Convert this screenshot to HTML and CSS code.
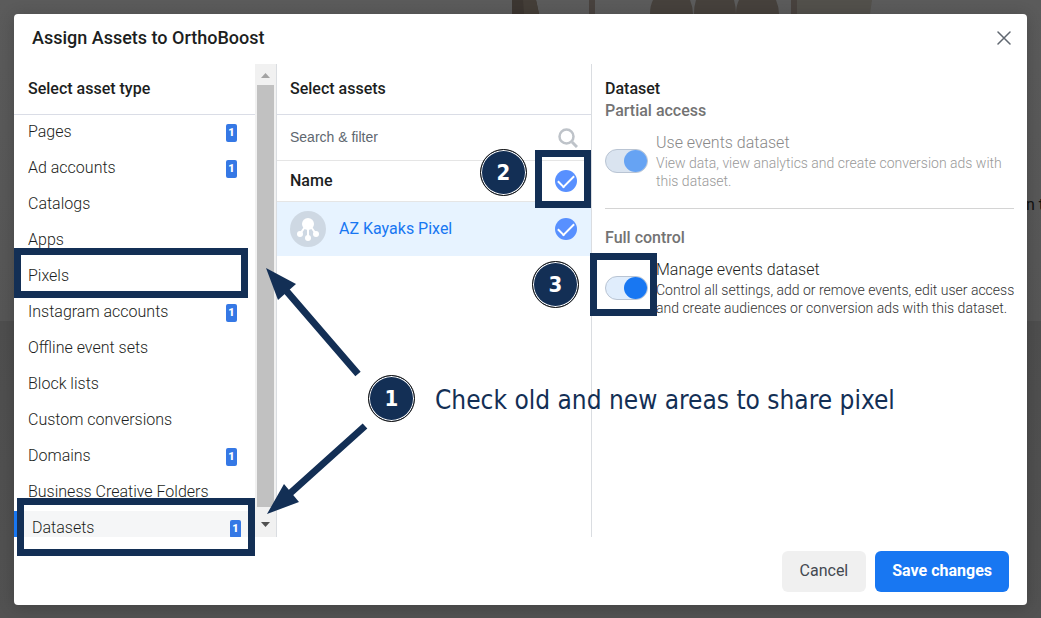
FILE: index.html
```
<!DOCTYPE html>
<html lang="en">
    <head>
        <meta charset="utf-8">
        <title>Assign Assets to OrthoBoost</title>
        <link rel="stylesheet" href="styles.css">
    </head>
    <body>
        <svg class="backdrop-art" width="360" height="14" viewBox="0 0 360 14" aria-hidden="true">
            <path d="M0 0h24l3 14H0z" fill="#3c3631"/>
            <path d="M11 0h13l3 14H12z" fill="#443e38"/>
            <path d="M77 0h6v14h-6zM279 0h6v14h-6z" fill="#48423e"/>
            <path d="M285 0h75l-2 14h-73z" fill="#52504b"/>
            <path d="M141 0h37q3 7 3 14h-43q0-8 3-14zM184 0h38q2 7 2 14h-42q0-8 2-14zM227 0h37q3 7 3 14h-43q0-8 3-14z" fill="#46413c"/>
        </svg>
        <span class="backdrop-text">n t</span>

        <div class="dialog" role="dialog" aria-labelledby="dialog-title">
            <header class="dialog-header">
                <h1 id="dialog-title">Assign Assets to OrthoBoost</h1>
                <button class="close" aria-label="Close">
                    <svg width="14" height="14" viewBox="0 0 14 14"><path d="M1 1l12 12M13 1L1 13" stroke="#606770" stroke-width="1.5" stroke-linecap="round"/></svg>
                </button>
            </header>

            <div class="columns">
                <section class="types">
                    <div class="types-list">
                        <h2>Select asset type</h2>
                        <ul>
                            <li><span class="name">Pages</span><span class="badge">1</span></li>
                            <li><span class="name">Ad accounts</span><span class="badge">1</span></li>
                            <li><span class="name">Catalogs</span></li>
                            <li><span class="name">Apps</span></li>
                            <li><span class="name">Pixels</span></li>
                            <li><span class="name">Instagram accounts</span><span class="badge">1</span></li>
                            <li><span class="name">Offline event sets</span></li>
                            <li><span class="name">Block lists</span></li>
                            <li><span class="name">Custom conversions</span></li>
                            <li><span class="name">Domains</span><span class="badge">1</span></li>
                            <li><span class="name">Business Creative Folders</span></li>
                            <li class="selected"><span class="name">Datasets</span><span class="badge">1</span></li>
                        </ul>
                    </div>
                    <div class="scrollbar">
                        <svg width="9" height="5" viewBox="0 0 9 5"><path d="M0 5L4.500 0L9 5z" fill="#a3a3a3"/></svg>
                        <div class="thumb"></div>
                        <svg width="9" height="5" viewBox="0 0 9 5"><path d="M0 0L4.500 5L9 0z" fill="#505050"/></svg>
                    </div>
                </section>

                <section class="assets">
                    <h2>Select assets</h2>
                    <div class="search">
                        <input type="text" placeholder="Search &amp; filter" aria-label="Search and filter">
                        <svg width="20" height="20" viewBox="0 0 20 20"><circle cx="8.500" cy="8.500" r="7" fill="none" stroke="#bec3c9" stroke-width="2.500"/><path d="M14 14l5 5" stroke="#bec3c9" stroke-width="3"/></svg>
                    </div>
                    <div class="name-row">
                        <label for="all-assets">Name</label>
                        <input type="checkbox" id="all-assets" class="check" checked>
                    </div>
                    <div class="asset">
                        <svg width="36" height="36" viewBox="0 0 36 36">
                            <circle cx="18" cy="18" r="18" fill="#ced8e3"/>
                            <path d="M17 13L10 23M18 13V26M19 13l7 10" stroke="#fff" stroke-width="2"/>
                            <circle cx="18" cy="13" r="6" fill="#fff"/>
                            <circle cx="10" cy="23" r="3" fill="#fff"/>
                            <circle cx="18" cy="27" r="3" fill="#fff"/>
                            <circle cx="26" cy="23" r="3" fill="#fff"/>
                        </svg>
                        <label for="kayaks">AZ Kayaks Pixel</label>
                        <input type="checkbox" id="kayaks" class="check" checked>
                    </div>
                </section>

                <section class="access">
                    <h2>Dataset</h2>
                    <h3>Partial access</h3>
                    <div class="permission disabled">
                        <input type="checkbox" id="use-events" class="switch" checked disabled>
                        <label for="use-events">Use events dataset
                            <small>View data, view analytics and create conversion ads with this dataset.</small>
                        </label>
                    </div>
                    <hr>
                    <h3>Full control</h3>
                    <div class="permission">
                        <input type="checkbox" id="manage-events" class="switch" checked>
                        <label for="manage-events">Manage events dataset
                            <small>Control all settings, add or remove events, edit user access and create audiences or conversion ads with this dataset.</small>
                        </label>
                    </div>
                </section>
            </div>

            <footer class="dialog-footer">
                <button class="cancel">Cancel</button>
                <button class="save">Save changes</button>
            </footer>
        </div>

        <!-- how-to notes drawn over the dialog -->
        <div class="frame frame-pixels"></div>
        <div class="frame frame-datasets"></div>
        <div class="frame frame-all"></div>
        <div class="frame frame-manage"></div>
        <svg class="arrows" width="104" height="250" viewBox="0 0 104 250" aria-hidden="true">
            <path d="M92 106L17 19M99 158L20 229" stroke="#132f55" stroke-width="7"/>
            <path d="M0 0l30 16-18 16zM1 246l32-12-15-18z" fill="#132f55"/>
        </svg>
        <span class="step step-1">1</span>
        <span class="step step-2">2</span>
        <span class="step step-3">3</span>
        <p class="note">Check old and new areas to share pixel</p>
    </body>
</html>
```
FILE: styles.css
```
* { box-sizing: border-box; }
body {
    margin: 0;
    padding: 14px 14px 13px;
    min-height: 100vh;
    position: relative;
    overflow: hidden;
    background: linear-gradient(#5b5b5b, #565656 321px, #4e4e4e 321px, #525252);
    font: 16px/22px Roboto, sans-serif;
    color: #1c1e21;
}
h1, h2, h3, p, ul { margin: 0; padding: 0; }
h1 { font-size: 18px; font-weight: 500; }
h2, h3 { font-size: 16px; font-weight: 500; }
button { border: 0; font: inherit; }

.backdrop-art { position: absolute; left: 512px; top: 0; }
.backdrop-text { position: absolute; left: 1026px; top: 194px; color: #111; white-space: nowrap; }

.dialog { position: relative; background: #fff; border-radius: 4px; box-shadow: 0 2px 16px rgba(0, 0, 0, .2); }
.dialog-header { display: flex; justify-content: space-between; align-items: center; height: 50px; padding: 0 14px 2px 18px; }
.close { display: flex; padding: 2px; background: none; }

.columns { display: grid; grid-template-columns: 263px 315px 1fr; height: 473px; }
.types, .assets { border-right: 1px solid #dadde1; }
.types h2, .assets h2 { height: 51px; padding: 0 13px; line-height: 50px; border-bottom: 1px solid #dadde6; }
.types h2 { padding-left: 14px; }
.types { display: flex; overflow: hidden; }
.types-list { flex: 1; height: 473px; overflow: hidden; }
.types ul { list-style: none; }
.types li { display: flex; height: 36px; padding-left: 14px; line-height: 34px; font-weight: 300; color: #1c1e21; }
.types .name { flex: none; width: 198px; }
.types .selected { border-left: 4px solid #1877f2; background: #f5f6f7; }
.badge { width: 11px; height: 18px; margin-top: 9px; border-radius: 2px; background: #3578e5; color: #fff; font-size: 11px; font-weight: 900; line-height: 18px; text-align: center; }

.scrollbar { display: flex; flex-direction: column; align-items: center; width: 21px; padding: 9px 2px 9px 2px; background: #f1f1f1; }
.scrollbar svg { flex: none; }
.thumb { width: 17px; height: 422px; margin: 7px 0 15px; background: #c1c1c1; }

.search { display: flex; align-items: center; height: 46px; padding: 0 13px; border-bottom: 1px solid #e5e5e5; }
.search input { flex: 1; min-width: 0; padding: 0 0 2px; border: 0; outline: 0; font: 14px "Liberation Sans", sans-serif; }
.search input::placeholder { color: #606770; }
.name-row { display: flex; align-items: center; justify-content: space-between; height: 41px; padding: 0 14px 0 13px; border-bottom: 1px solid #e5e5e5; font-weight: 500; }
.asset { display: flex; align-items: center; gap: 13px; height: 54px; padding: 0 14px 0 13px; background: #e7f3ff; color: #1877f2; }
.asset label { flex: 1; }

.check { appearance: none; display: grid; place-items: center; width: 22px; height: 22px; margin: 0; border-radius: 50%; background: #5890ff; }
.check::before { content: ""; width: 14px; height: 7px; margin-bottom: 4px; border: solid #fff; border-width: 0 0 2px 2px; transform: rotate(-45deg); }

.access { padding: 14px 13px; }
.access h3 { color: #737373; }
.permission { display: flex; align-items: center; gap: 8px; margin: 10px -6px 0 0; }
.permission label { flex: 1; font-weight: 300; color: #1c1e21; }
.permission small { display: block; font-size: 14px; line-height: 18px; color: #333; }
.permission.disabled label { color: #888; }
.permission.disabled small { color: #999; }
.access hr { margin: 18px 0; border: 0; border-top: 1px solid #d4d4d4; }

.switch { appearance: none; display: flex; justify-content: flex-end; width: 43px; height: 24px; margin: 0; border: 1px solid #b9c4d3; border-radius: 12px; background: #e0edfc; }
.switch::before { content: ""; width: 23px; height: 22px; border-radius: 50%; background: #1877f2; }
.switch:disabled { background: #dae4f0; }
.switch:disabled::before { background: #66a3f3; }

.dialog-footer { display: flex; justify-content: flex-end; gap: 9px; padding: 14px 18px 13px; }
.dialog-footer button { height: 41px; padding: 0 17px 2px; border-radius: 6px; }
.dialog-footer .cancel { padding: 0 18px 2px; background: #f0f0f0; color: #444950; }
.dialog-footer .save { background: #1877f2; color: #fff; font-weight: 700; }

.frame { position: absolute; border: 7px solid #132f55; }
.frame-pixels { left: 14px; top: 248px; width: 234px; height: 50px; }
.frame-datasets { left: 17px; top: 498px; width: 238px; height: 58px; }
.frame-all { left: 535px; top: 150px; width: 56px; height: 58px; }
.frame-manage { left: 590px; top: 253px; width: 67px; height: 63px; }
.arrows { position: absolute; left: 266px; top: 268px; }
.step {
    position: absolute;
    width: 47px;
    height: 47px;
    border: 1px solid #111;
    border-radius: 50%;
    box-shadow: inset 0 0 0 1px #fff;
    background: #132f55;
    color: #fff;
    font: bold 22px/45px "DejaVu Sans Condensed", "DejaVu Sans", sans-serif;
    text-align: center;
}
.step-1 { left: 368px; top: 375px; }
.step-2 { left: 480px; top: 149px; }
.step-3 { left: 532px; top: 261px; }
.note { position: absolute; left: 435px; top: 382px; color: #132f55; font: 26px/36px "DejaVu Sans Condensed", "Noto Sans", sans-serif; white-space: nowrap; }
```
